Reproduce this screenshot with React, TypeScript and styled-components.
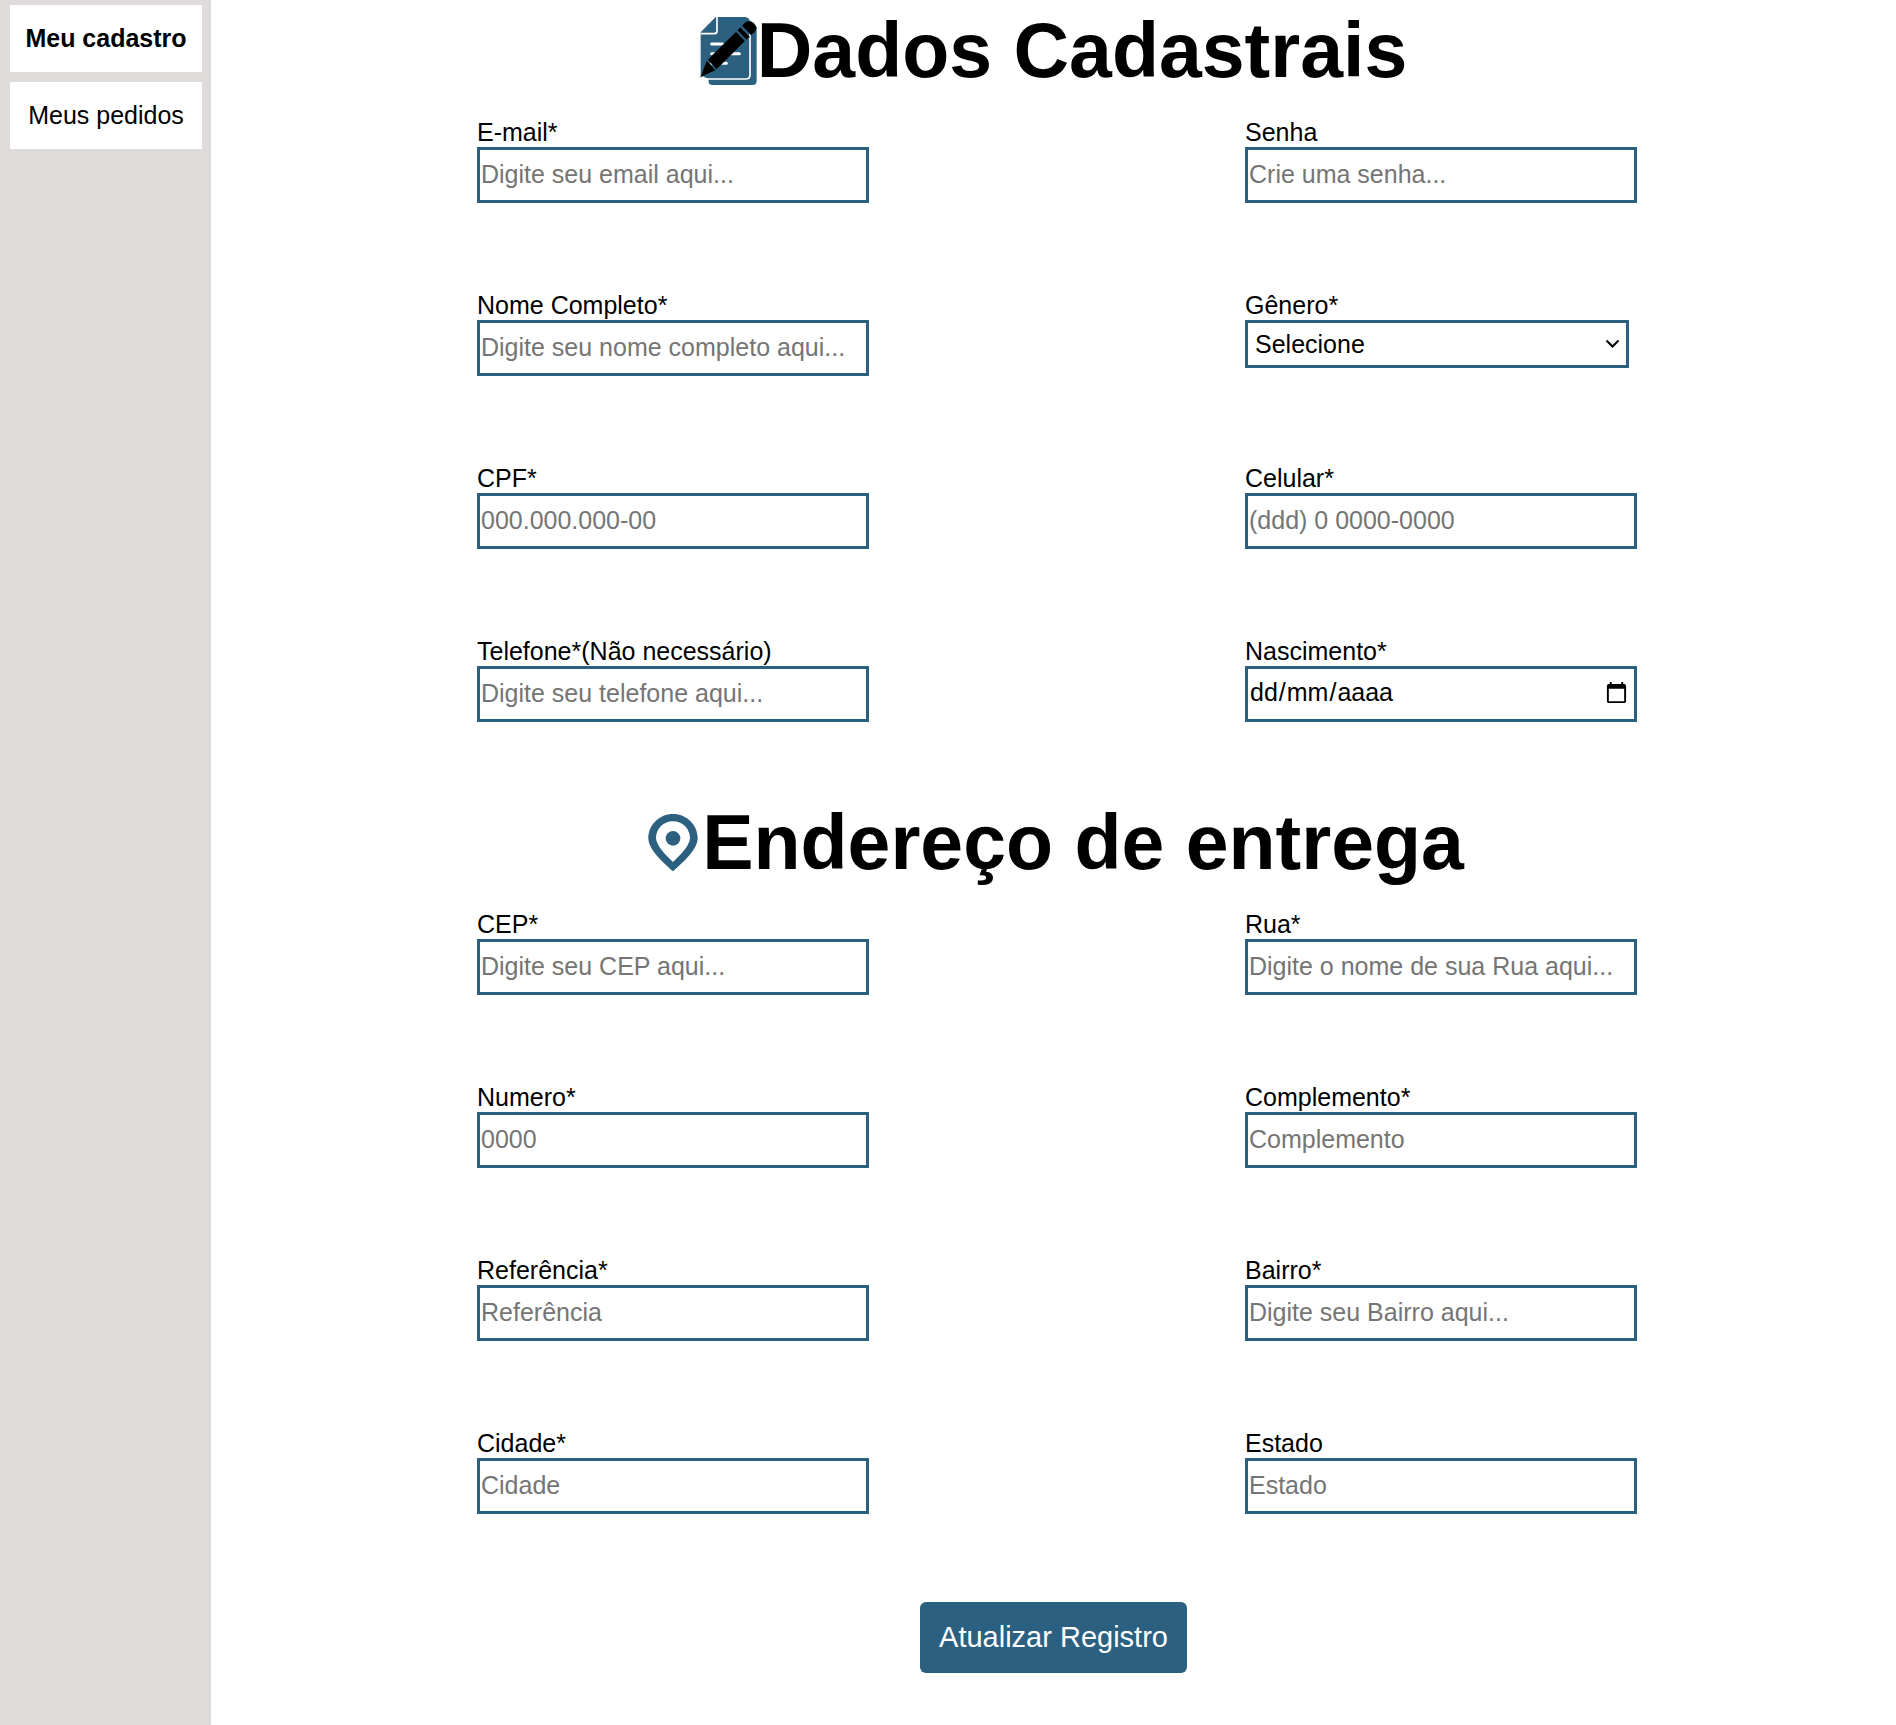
import React, { useState } from "react";
import styled, { createGlobalStyle } from "styled-components";

const blue = "#2c6080";

const GlobalStyle = createGlobalStyle`
  *, *::before, *::after { box-sizing: border-box; }
  body {
    margin: 0;
    background: #fff;
    color: #000;
    font-family: "Liberation Sans", Arial, Helvetica, sans-serif;
    font-size: 25px;
    line-height: 29px;
  }
  input, select, button { font: inherit; }
`;

const Page = styled.div`
  display: flex;
  min-height: 100vh;
`;

const Sidebar = styled.nav`
  flex: none;
  display: flex;
  flex-direction: column;
  gap: 10px;
  padding: 5px 9px 5px 10px;
  background: #dfdbda;
`;

const MenuLink = styled.a<{ $active?: boolean }>`
  width: 192px;
  padding: 19px 0;
  background: #fff;
  color: #000;
  font-weight: ${(p) => (p.$active ? 700 : 400)};
  text-align: center;
  text-decoration: none;
`;

const Form = styled.form`
  flex: 1;
  display: flex;
  flex-direction: column;
  align-items: center;
  padding: 6px 0 48px;
`;

const Section = styled.section`
  width: 100%;
  display: flex;
  flex-direction: column;
  align-items: center;
  gap: 24px;
  margin-bottom: 76px;
`;

const Title = styled.h1`
  display: flex;
  align-items: center;
  justify-content: center;
  margin: 0;
  font-size: 77px;
  font-weight: 700;
  line-height: 88px;

  svg { flex: none; }
`;

const Fields = styled.div`
  width: 100%;
  max-width: 1167px;
  display: grid;
  grid-template-columns: repeat(2, 392px);
  justify-content: space-between;
  row-gap: 88px;
  padding-left: 7px;
`;

const Field = styled.div`
  display: flex;
  flex-direction: column;
  align-items: flex-start;
`;

const Control = styled.div<{ $narrow?: boolean }>`
  position: relative;
  width: ${(p) => (p.$narrow ? "384px" : "100%")};
`;

const TextInput = styled.input`
  display: block;
  width: 100%;
  height: 56px;
  padding: 0 1px 2px;
  border: 3px solid ${blue};
  border-radius: 0;
  background: #fff;
  color: #000;

  &::placeholder {
    color: #757575;
    opacity: 1;
  }
`;

const DateInput = styled(TextInput)<{ $empty: boolean }>`
  padding-right: 3px;

  &:not(:focus)::-webkit-datetime-edit {
    opacity: ${(p) => (p.$empty ? 0 : 1)};
  }

  &:focus + span { display: none; }
`;

const DateHint = styled.span`
  position: absolute;
  top: 12px;
  left: 5px;
  display: flex;
  gap: 1px;
  pointer-events: none;
`;

const Select = styled.select`
  display: block;
  width: 100%;
  height: 48px;
  padding: 0 30px 0 7px;
  border: 3px solid ${blue};
  border-radius: 0;
  background: #fff;
  color: #000;
  appearance: none;
`;

const Chevron = styled.svg`
  position: absolute;
  top: 19px;
  right: 9px;
  pointer-events: none;
`;

const Submit = styled.button`
  margin-top: 12px;
  padding: 19px;
  border: 0;
  border-radius: 6px;
  background: ${blue};
  color: #fff;
  font-size: 29px;
  line-height: 33px;
`;

const DocumentIcon = () => (
  <svg width="57" height="69" viewBox="60 47 171 207" aria-hidden="true">
    <path d="M107 50H196Q207 51 210 63L230 80V242Q230 254 217 254H98Q85 254 85 242V236L62 224V96Z" fill={blue} />
    <path d="M60 236H197Q210 236 210 223V64" fill="none" stroke="#fff" strokeWidth="5" />
    <path d="M60 238H85V256H60Z" fill="#fff" />
    <path d="M62 100H103Q111 100 111 92V50" fill="none" stroke="#fff" strokeWidth="5" />
    <path d="M62 226Q63 234 72 234H62Z" fill="#fff" />
    <path d="M95 131H128M95 160H178M95 189H139" stroke="#fff" strokeWidth="9" strokeLinecap="round" />
    <g fill="#000" stroke={blue} strokeWidth="1">
      <path d="M83 178L168 94L195 122L110 207Z" />
      <path d="M80 181L107 210L61 231Z" />
      <path d="M172 90L181 81L209 109L199 118Z" />
      <path d="M186 76L194 67Q207 57 221 68Q235 82 224 96L213 105Z" />
    </g>
  </svg>
);

const PinIcon = () => (
  <svg width="59" height="59" viewBox="39 68 177 177" aria-hidden="true">
    <path
      fill={blue}
      fillRule="evenodd"
      d="M129 71C89 71 55 103 55 143C55 177 96 213 129 243C162 213 203 177 203 143C203 103 169 71 129 71ZM129 93C157 93 180 115 180 143C180 164 153 192 129 215C105 192 78 164 78 143C78 115 101 93 129 93Z"
    />
    <circle cx="129" cy="144" r="22" fill={blue} />
  </svg>
);

type FieldSpec = {
  id: string;
  label: string;
  placeholder: string;
  type?: string;
};

const accountFields: FieldSpec[] = [
  { id: "email", label: "E-mail*", placeholder: "Digite seu email aqui...", type: "email" },
  { id: "senha", label: "Senha", placeholder: "Crie uma senha...", type: "password" },
  { id: "nome", label: "Nome Completo*", placeholder: "Digite seu nome completo aqui..." },
  { id: "genero", label: "Gênero*", placeholder: "Selecione", type: "select" },
  { id: "cpf", label: "CPF*", placeholder: "000.000.000-00" },
  { id: "celular", label: "Celular*", placeholder: "(ddd) 0 0000-0000", type: "tel" },
  { id: "telefone", label: "Telefone*(Não necessário)", placeholder: "Digite seu telefone aqui...", type: "tel" },
  { id: "nascimento", label: "Nascimento*", placeholder: "dd/mm/aaaa", type: "date" },
];

const addressFields: FieldSpec[] = [
  { id: "cep", label: "CEP*", placeholder: "Digite seu CEP aqui..." },
  { id: "rua", label: "Rua*", placeholder: "Digite o nome de sua Rua aqui..." },
  { id: "numero", label: "Numero*", placeholder: "0000" },
  { id: "complemento", label: "Complemento*", placeholder: "Complemento" },
  { id: "referencia", label: "Referência*", placeholder: "Referência" },
  { id: "bairro", label: "Bairro*", placeholder: "Digite seu Bairro aqui..." },
  { id: "cidade", label: "Cidade*", placeholder: "Cidade" },
  { id: "estado", label: "Estado", placeholder: "Estado" },
];

/* Shows the Brazilian date pattern while the field is empty, whatever the browser locale. */
function DateControl({ id, hint }: { id: string; hint: string }) {
  const [value, setValue] = useState("");
  return (
    <Control>
      <DateInput
        id={id}
        name={id}
        type="date"
        value={value}
        $empty={value === ""}
        onChange={(e: React.ChangeEvent<HTMLInputElement>) => setValue(e.target.value)}
      />
      {value === "" && (
        <DateHint aria-hidden="true">
          {hint.split(/(\/)/).map((part, i) => <span key={i}>{part}</span>)}
        </DateHint>
      )}
    </Control>
  );
}

function SelectControl({ id, placeholder }: { id: string; placeholder: string }) {
  return (
    <Control $narrow>
      <Select id={id} name={id} defaultValue="">
        <option value="">{placeholder}</option>
        <option value="f">Feminino</option>
        <option value="m">Masculino</option>
        <option value="o">Outro</option>
      </Select>
      <Chevron width="15" height="10" viewBox="0 0 15 10" fill="none" stroke="#000" strokeWidth="2" aria-hidden="true">
        <path d="M1.5 1.5L7.5 7.5L13.5 1.5" />
      </Chevron>
    </Control>
  );
}

function FormField({ id, label, placeholder, type = "text" }: FieldSpec) {
  return (
    <Field>
      <label htmlFor={id}>{label}</label>
      {type === "select" && <SelectControl id={id} placeholder={placeholder} />}
      {type === "date" && <DateControl id={id} hint={placeholder} />}
      {type !== "select" && type !== "date" && (
        <Control>
          <TextInput id={id} name={id} type={type} placeholder={placeholder} />
        </Control>
      )}
    </Field>
  );
}

export default function App() {
  return (
    <Page>
      <GlobalStyle />
      <Sidebar>
        <MenuLink href="#cadastro" $active>Meu cadastro</MenuLink>
        <MenuLink href="#pedidos">Meus pedidos</MenuLink>
      </Sidebar>
      <Form onSubmit={(e: React.FormEvent) => e.preventDefault()}>
        <Section>
          <Title><DocumentIcon />Dados Cadastrais</Title>
          <Fields>{accountFields.map((f) => <FormField key={f.id} {...f} />)}</Fields>
        </Section>
        <Section>
          <Title><PinIcon />Endereço de entrega</Title>
          <Fields>{addressFields.map((f) => <FormField key={f.id} {...f} />)}</Fields>
        </Section>
        <Submit type="submit">Atualizar Registro</Submit>
      </Form>
    </Page>
  );
}
